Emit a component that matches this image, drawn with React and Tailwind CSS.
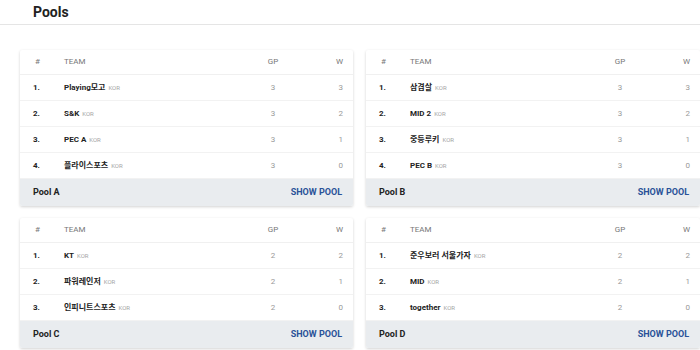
import React from 'react';

const pools = [
  {
    name: 'Pool A',
    rows: [
      { team: 'Playing모고', gp: 3, w: 3 },
      { team: 'S&K', gp: 3, w: 2 },
      { team: 'PEC A', gp: 3, w: 1 },
      { team: '플라이스포츠', gp: 3, w: 0 },
    ],
  },
  {
    name: 'Pool B',
    rows: [
      { team: '삼겹살', gp: 3, w: 3 },
      { team: 'MID 2', gp: 3, w: 2 },
      { team: '중등루키', gp: 3, w: 1 },
      { team: 'PEC B', gp: 3, w: 0 },
    ],
  },
  {
    name: 'Pool C',
    rows: [
      { team: 'KT', gp: 2, w: 2 },
      { team: '파워레인저', gp: 2, w: 1 },
      { team: '인피니트스포츠', gp: 2, w: 0 },
    ],
  },
  {
    name: 'Pool D',
    rows: [
      { team: '준우보러 서울가자', gp: 2, w: 2 },
      { team: 'MID', gp: 2, w: 1 },
      { team: 'together', gp: 2, w: 0 },
    ],
  },
];

function PoolCard({ pool }) {
  return (
    <div className="bg-white rounded-[2px] shadow-[0_1px_3px_rgba(0,0,0,0.18)] overflow-hidden">
      {/* header row */}
      <div className="flex items-center h-[25px] border-b border-[#f0f0f0] text-[8px] text-[#777] pr-[10px]">
        <div className="w-[44px] pl-[15px]">#</div>
        <div className="flex-1">TEAM</div>
        <div className="w-[20px] text-center">GP</div>
        <div className="w-[60px] text-right">W</div>
      </div>
      {pool.rows.map((r, i) => (
        <div key={i} className="flex items-center h-[26px] border-b border-[#f2f2f2] text-[8px] pr-[10px]">
          <div className="w-[44px] pl-[13px] font-bold text-[#222]">{i + 1}.</div>
          <div className="flex-1 flex items-baseline gap-[3px]">
            <span className="font-bold text-[#222]">{r.team}</span>
            <span className="text-[6px] text-[#a5a5a5]">KOR</span>
          </div>
          <div className="w-[20px] text-center text-[#999]">{r.gp}</div>
          <div className="w-[60px] text-right text-[#999]">{r.w}</div>
        </div>
      ))}
      <div className="flex items-center justify-between h-[27px] bg-[#e9ecef] pl-[13px] pr-[11px]">
        <span className="text-[9px] font-bold text-[#222]">{pool.name}</span>
        <span className="text-[9px] font-bold text-[#2a5298]">SHOW POOL</span>
      </div>
    </div>
  );
}

export default function App() {
  return (
    <div className="w-[700px] h-[350px] bg-white overflow-hidden" style={{ fontFamily: 'Roboto, "Noto Sans CJK KR", sans-serif' }}>
      <div className="h-[25px] border-b border-[#e5e5e5] pl-[33px] flex items-center">
        <h1 className="text-[14px] font-bold text-[#222] leading-none">Pools</h1>
      </div>
      <div className="grid grid-cols-[333px_334px] gap-x-[13px] gap-y-[12px] pl-[20px] pt-[25px]">
        {pools.map((p) => (
          <PoolCard key={p.name} pool={p} />
        ))}
      </div>
    </div>
  );
}
